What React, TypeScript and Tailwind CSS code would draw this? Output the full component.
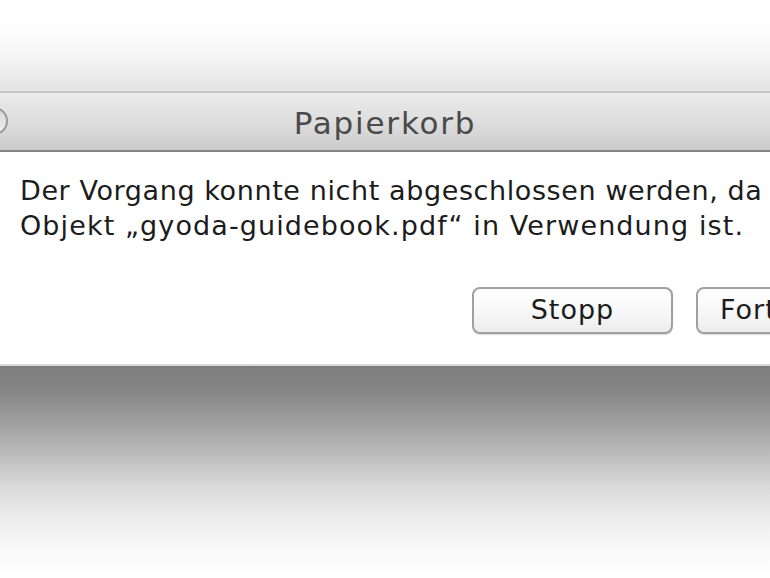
import React from "react";

export default function App() {
  const font = { fontFamily: '"DejaVu Sans", Verdana, sans-serif' };
  return (
    <div className="w-[770px] h-[578px] overflow-hidden flex flex-col bg-white" style={font}>
      <div className="h-[91px] shrink-0 bg-[linear-gradient(to_bottom,#ffffff_0%,#fdfdfd_35%,#f1f1f1_70%,#e3e3e3_100%)]" />
      <div className="h-[2px] shrink-0 bg-[#c6c6c6]" />
      <div className="relative h-[59px] shrink-0 bg-[linear-gradient(to_bottom,#ebebeb_0%,#dedede_50%,#cbcbcb_100%)] border-b-[2px] border-[#858585] flex items-center justify-center">
        <div className="absolute left-[-20px] top-[14px] w-[28px] h-[28px] rounded-full border-[2px] border-[#9a9a9a] bg-[linear-gradient(to_bottom,#d8d8d8,#f0f0f0)]" />
        <span className="text-[31px] tracking-[1.8px] leading-none text-[#4a4a4a] mt-[4px]">Papierkorb</span>
      </div>
      <div className="h-[212px] shrink-0 bg-white flex flex-col">
        <div className="pl-[20px] pt-[21px] text-[27px] leading-[35px] text-[#1c1c1c] whitespace-nowrap">
          <div className="tracking-[0.6px]">Der Vorgang konnte nicht abgeschlossen werden, da das</div>
          <div className="tracking-[1.1px]">Objekt „gyoda-guidebook.pdf“ in Verwendung ist.</div>
        </div>
        <div className="flex gap-[23px] pl-[472px] mt-[44px] whitespace-nowrap">
          <div className="w-[201px] h-[47px] shrink-0 rounded-[8px] border-[2px] border-[#a0a0a0] bg-[linear-gradient(to_bottom,#ffffff_0%,#f8f8f8_50%,#ededed_100%)] flex items-center justify-center text-[27px] tracking-[1px] text-[#1c1c1c] shadow-[0_1px_1px_rgba(0,0,0,0.15)]">
            Stopp
          </div>
          <div className="w-[201px] h-[47px] shrink-0 rounded-[8px] border-[2px] border-[#a0a0a0] bg-[linear-gradient(to_bottom,#ffffff_0%,#f8f8f8_50%,#ededed_100%)] flex items-center justify-start pl-[22px] text-[27px] tracking-[1px] text-[#1c1c1c] shadow-[0_1px_1px_rgba(0,0,0,0.15)]">
            Fortfahren
          </div>
        </div>
      </div>
      <div className="h-[2px] shrink-0 bg-[#d9d9d9]" />
      <div className="flex-1 bg-[linear-gradient(to_bottom,#7d7d7d_0%,#848484_10%,#9c9c9c_25%,#b9b9b9_40%,#d6d6d6_55%,#ebebeb_70%,#f8f8f8_85%,#ffffff_100%)]" />
    </div>
  );
}
